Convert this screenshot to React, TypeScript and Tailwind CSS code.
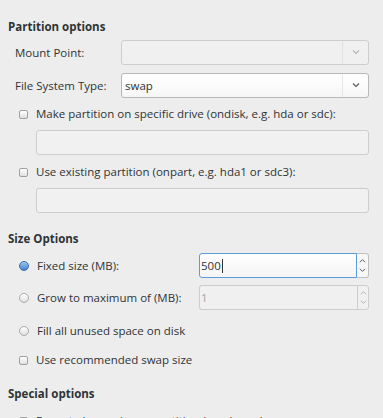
import React from 'react';

const font = { fontFamily: '"Open Sans", "DejaVu Sans", sans-serif' };

const Chevron = ({ up = false, className = '' }: { up?: boolean; className?: string }) => (
  <svg width="8" height="5" viewBox="0 0 8 5" className={className}>
    <path d={up ? 'M1 4.5 L4 1.5 L7 4.5' : 'M1 0.5 L4 3.5 L7 0.5'} fill="none" stroke="currentColor" strokeWidth="1.1" />
  </svg>
);

const Check = () => (
  <span className="block h-[9px] w-[9px] shrink-0 rounded-[2px] border border-[#a0a0a0] bg-gradient-to-b from-[#ffffff] to-[#e0e0e0]" />
);

const Radio = ({ on = false }: { on?: boolean }) =>
  on ? (
    <span className="block h-[10px] w-[10px] shrink-0 rounded-full border border-[#3a6fa8] bg-gradient-to-b from-[#9cc5ee] to-[#3f83cf]" />
  ) : (
    <span className="block h-[10px] w-[10px] shrink-0 rounded-full border border-[#aaaaaa] bg-gradient-to-b from-[#ffffff] to-[#e0e0e0]" />
  );

const Combo = ({ value, disabled = false }: { value?: string; disabled?: boolean }) => (
  <div
    className={`flex h-[25px] w-[248px] items-stretch rounded-[3px] border ${
      disabled ? 'border-[#cdcdcd] bg-[#f0f0f0]' : 'border-[#b8b8b5] bg-gradient-to-b from-[#ffffff] to-[#f6f6f6]'
    }`}
  >
    <div className="flex flex-1 items-center pl-[3px] text-[11.5px] text-[#2e3436]">{value}</div>
    <div className={`w-px ${disabled ? 'bg-[#e2e2e2]' : 'bg-[#e6e6e6]'}`} />
    <div className={`flex w-[25px] items-center justify-center ${disabled ? 'text-[#b4b4b4]' : 'text-[#555]'}`}>
      <Chevron />
    </div>
  </div>
);

const Entry = () => <div className="h-[25px] w-[333px] rounded-[3px] border border-[#cdcdcd] bg-[#f1f1f1]" />;

const Spin = ({ value, focus = false }: { value: string; focus?: boolean }) => (
  <div className="flex h-[25px] w-[170px]">
    <div
      className={`flex flex-1 items-center rounded-l-[3px] border pl-[1px] text-[11.5px] ${
        focus ? 'border-[#5b9be0] bg-gradient-to-b from-[#ffffff] to-[#f4f4f4] text-[#2e3436]' : 'border-[#cdcdcd] border-r-0 bg-[#f0f0f0] text-[#a4a4a4]'
      }`}
    >
      {value}
      {focus && <span className="ml-px h-[14px] w-px bg-[#2e3436]" />}
    </div>
    <div
      className={`flex w-[12px] flex-col items-center justify-between rounded-r-[3px] border py-[4px] ${
        focus ? 'border-[#c0c0c0] border-l-0 bg-[#f7f7f7] text-[#555]' : 'border-[#cdcdcd] bg-[#f0f0f0] text-[#b4b4b4]'
      }`}
    >
      <Chevron up className="w-[7px]" />
      <Chevron className="w-[7px]" />
    </div>
  </div>
);

const Heading = ({ children, className = '' }: { children: React.ReactNode; className?: string }) => (
  <div className={`flex h-4 items-center pl-[8px] text-[11.5px] font-bold text-[#2e3436] ${className}`}>{children}</div>
);

const OptionRow = ({ icon, label, className = '' }: { icon: React.ReactNode; label: string; className?: string }) => (
  <div className={`flex h-4 items-center gap-[8px] pl-[19px] text-[11.5px] text-[#2e3436] ${className}`}>
    {icon}
    <span className="whitespace-nowrap">{label}</span>
  </div>
);

export default function App() {
  return (
    <div style={font} className="flex h-[418px] w-[383px] flex-col overflow-hidden bg-[#ededed] pt-[19px]">
      <Heading>Partition options</Heading>

      <div className="mt-[5px] flex items-center">
        <span className="w-[121px] pl-[15px] text-[11.5px] text-[#2e3436]">Mount Point:</span>
        <Combo disabled />
      </div>
      <div className="mt-[8px] flex items-center">
        <span className="w-[121px] pl-[15px] text-[11.5px] text-[#2e3436]">File System Type:</span>
        <Combo value="swap" />
      </div>

      <OptionRow className="mt-[8px]" icon={<Check />} label="Make partition on specific drive (ondisk, e.g. hda or sdc):" />
      <div className="mt-[8px] pl-[36px]">
        <Entry />
      </div>
      <OptionRow className="mt-[9px]" icon={<Check />} label="Use existing partition (onpart, e.g. hda1 or sdc3):" />
      <div className="mt-[8px] pl-[36px]">
        <Entry />
      </div>

      <Heading className="mt-[18px]">Size Options</Heading>

      <div className="mt-[6px] flex h-[25px] items-center">
        <OptionRow className="w-[199px] pl-[18px]" icon={<Radio on />} label="Fixed size (MB):" />
        <Spin value="500" focus />
      </div>
      <div className="mt-[7px] flex h-[25px] items-center">
        <OptionRow className="w-[199px] pl-[18px]" icon={<Radio />} label="Grow to maximum of (MB):" />
        <Spin value="1" />
      </div>

      <OptionRow className="mt-[13px] pl-[18px]" icon={<Radio />} label="Fill all unused space on disk" />
      <OptionRow className="mt-[13px]" icon={<Check />} label="Use recommended swap size" />

      <Heading className="mt-[18px]">Special options</Heading>
      <OptionRow className="mt-[11px]" icon={<Check />} label="Force to be a primary partition (asprimary)" />
    </div>
  );
}
